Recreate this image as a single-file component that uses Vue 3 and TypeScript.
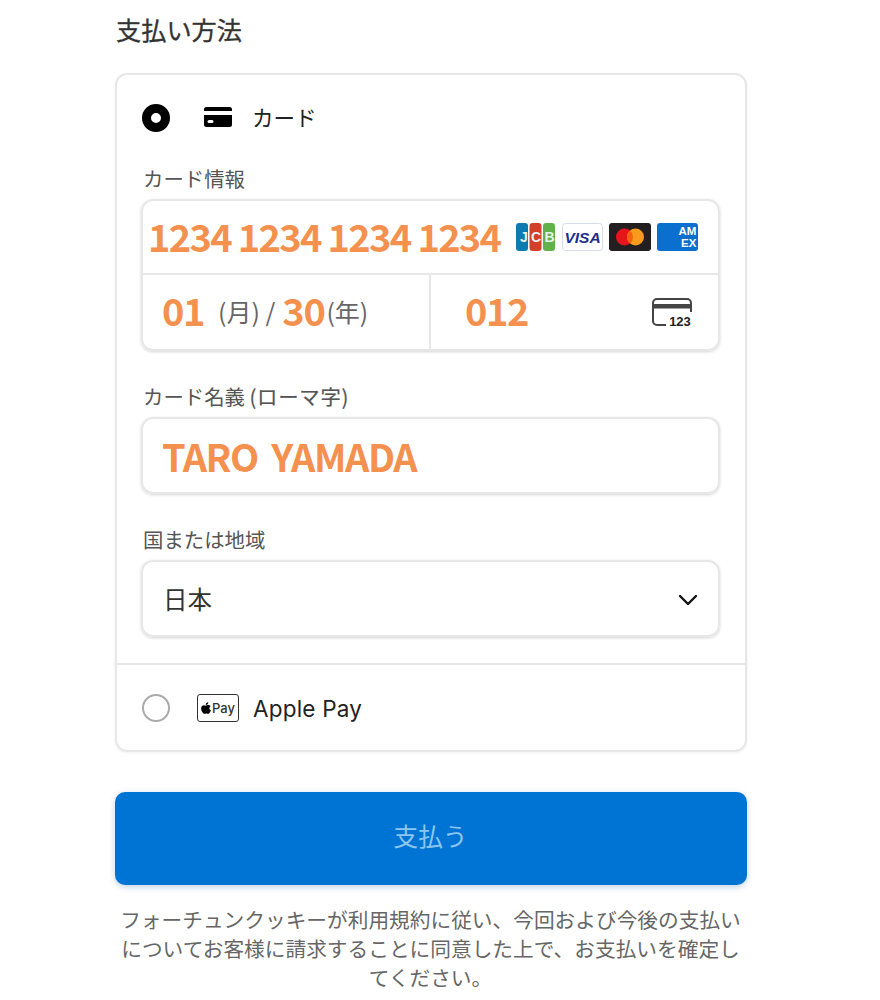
<script setup lang="ts">
const brand = 'Payment'
</script>

<template>
  <main class="page" :aria-label="brand">
    <h1 class="title">支払い方法</h1>
    <section class="card">
      <div class="method">
        <span class="radio on"></span>
        <svg class="card-icon" width="28" height="20" viewBox="0 0 28 20">
          <path d="M0 2.5A2.5 2.5 0 0 1 2.5 0h23A2.5 2.5 0 0 1 28 2.5V4H0zM0 8h28v9.5a2.5 2.5 0 0 1-2.5 2.5h-23A2.5 2.5 0 0 1 0 17.500zM5 13a1 1 0 0 0 0 3h3a1 1 0 0 0 0-3z" fill="#000" />
        </svg>
        <span class="method-name">カード</span>
      </div>
      <div class="details">
        <div class="label first">カード情報</div>
        <div class="group">
          <div class="num-row">
            <span class="num">1234 1234 1234 1234</span>
            <div class="brands">
              <svg width="39" height="28" viewBox="0 0 39 28">
                <rect x="0" width="12" height="28" rx="3" fill="#0b7bb0" />
                <rect x="13.500" width="12" height="28" rx="3" fill="#d0402b" />
                <rect x="27" width="12" height="28" rx="3" fill="#63b14a" />
                <text x="8" y="19" class="jcb">J</text>
                <text x="20" y="19" class="jcb">C</text>
                <text x="33.500" y="19" class="jcb">B</text>
              </svg>
              <svg width="41" height="28" viewBox="0 0 41 28">
                <rect x=".5" y=".5" width="40" height="27" rx="3" fill="#fff" stroke="#d6dbe6" />
                <text x="20.500" y="19.500" class="visa">VISA</text>
              </svg>
              <svg width="42" height="28" viewBox="0 0 42 28">
                <rect width="42" height="28" rx="3" fill="#231f20" />
                <circle cx="15.500" cy="14" r="8.500" fill="#e8141c" />
                <circle cx="26.500" cy="14" r="8.500" fill="#f79a1e" />
                <path d="M21 7.500a8.500 8.500 0 0 1 0 13 8.500 8.500 0 0 1 0-13z" fill="#f5610f" />
              </svg>
              <svg width="41" height="28" viewBox="0 0 41 28">
                <rect width="41" height="28" rx="3" fill="#0a6fce" />
                <text x="21.500" y="12" class="amex">AM</text>
                <text x="24" y="24" class="amex">EX</text>
              </svg>
            </div>
          </div>
          <div class="exp-row">
            <div class="exp">
              <span class="val">01</span>
              <span class="hint month">(月) /</span>
              <span class="val year">30</span>
              <span class="hint">(年)</span>
            </div>
            <div class="cvc">
              <span class="val">012</span>
              <svg class="cvc-icon" width="40" height="32" viewBox="0 0 40 32">
                <path d="M14 27H5a4 4 0 0 1-4-4V5a4 4 0 0 1 4-4h30a4 4 0 0 1 4 4v9" fill="none" stroke="#444" stroke-width="2" />
                <rect x="1" y="6" width="38" height="4.500" fill="#444" />
                <text x="28" y="27.500" class="cvc-text">123</text>
              </svg>
            </div>
          </div>
        </div>

        <div class="label">カード名義 <span class="roma">(ローマ字)</span></div>
        <div class="field name"><span class="val">TARO YAMADA</span></div>

        <div class="label">国または地域</div>
        <div class="field select">
          <span>日本</span>
          <svg width="20" height="12" viewBox="0 0 20 12">
            <path d="M2 2l8 8 8-8" fill="none" stroke="#111" stroke-width="2.400" stroke-linecap="round" stroke-linejoin="round" />
          </svg>
        </div>
      </div>
      <div class="method apple">
        <span class="radio"></span>
        <span class="apay">
          <svg width="10" height="12" viewBox="0 0 12 14">
            <path d="M8.700 0c.1 1-.3 1.900-.8 2.500-.6.700-1.400 1.100-2.200 1-.1-.9.300-1.800.8-2.400C7.100.500 8 .1 8.700 0zM11.500 4.800c-.9.600-1.400 1.400-1.400 2.500 0 1.200.7 2.200 1.800 2.700-.3.900-.7 1.700-1.300 2.500-.6.800-1.200 1.500-2.100 1.500s-1.200-.5-2.200-.5-1.400.5-2.200.5c-.9 0-1.500-.8-2.100-1.600C1 11.100.2 9.300.2 7.500c0-2.500 1.600-3.900 3.300-3.900.9 0 1.700.6 2.300.6.500 0 1.400-.7 2.500-.7.900 0 2.500.4 3.200 1.300z" fill="#000" />
          </svg>
          <span>Pay</span>
        </span>
        <span class="method-name latin">Apple Pay</span>
      </div>
    </section>
    <button class="pay" type="button"><span class="pay-text">支払う</span></button>
    <p class="note">フォーチュンクッキーが利用規約に従い、今回および今後の支払いについてお客様に請求することに同意した上で、お支払いを確定してください。</p>
  </main>
</template>

<style>
html, body { margin: 0; background: #fff; }
</style>

<style scoped>
.page {
  box-sizing: border-box;
  width: 632px;
  margin-left: 114.500px;
  padding-top: 11px;
  font-family: "Noto Sans CJK JP", "Noto Sans", sans-serif;
  color: #222;
}
.title {
  margin: 0 0 26px 1.500px;
  font-size: 25.200px;
  line-height: 36px;
  font-weight: 400;
  color: #333;
  -webkit-text-stroke: .3px #333;
}
.card {
  box-sizing: border-box;
  height: 679px;
  border: 2px solid #e7e7e7;
  border-radius: 12px;
  box-shadow: 0 1px 3px rgba(0, 0, 0, .06);
  display: flex;
  flex-direction: column;
}
.method {
  display: flex;
  align-items: center;
  height: 85px;
  padding-left: 25.500px;
  flex: none;
}
.radio {
  box-sizing: border-box;
  width: 28px;
  height: 28px;
  border-radius: 50%;
  border: 2px solid #aaa;
  flex: none;
}
.radio.on {
  border: 9px solid #000;
  background: #fff;
}
.card-icon { margin-left: 34px; flex: none; margin-top: -2px; }
.method-name {
  margin-left: 20px;
  margin-bottom: 2px;
  font-size: 21.500px;
  color: #222;
}
.latin {
  margin-left: 14px;
  margin-bottom: 0;
  font-family: "Inter", "Noto Sans", sans-serif;
  font-size: 22.500px;
  letter-spacing: .2px;
}
.details {
  padding: 0 24.500px 26px;
  border-bottom: 2px solid #e7e7e7;
  flex: 1;
}
.label {
  font-size: 20.400px;
  line-height: 28px;
  color: #555;
  margin: 31px 0 7px 2px;
}
.label.first { margin-top: 4px; }
.roma { letter-spacing: .7px; -webkit-text-stroke: .2px #555; }
.group, .field {
  border: 2px solid #e7e7e7;
  border-radius: 12px;
  box-shadow: 0 1px 3px rgba(0, 0, 0, .17);
  box-sizing: border-box;
}
.group { height: 152px; }
.num-row {
  box-sizing: border-box;
  display: flex;
  align-items: center;
  height: 74px;
  padding: 0 20px 0 5px;
  border-bottom: 2px solid #e7e7e7;
  justify-content: space-between;
}
.num {
  font-size: 38px;
  font-weight: 700;
  color: #f5914f;
  letter-spacing: -1.700px;
  white-space: nowrap;
  margin-bottom: 4px;
}
.brands { display: flex; gap: 6px; align-items: center; flex: none; }
.brands svg { display: block; }
.brands svg:first-child { margin-right: 1px; }
.jcb {
  font: 700 14px "Liberation Sans", sans-serif;
  fill: #e8f2ee;
  text-anchor: middle;
}
.visa {
  font: italic 700 15.500px "Liberation Sans", sans-serif;
  fill: #1a2f8f;
  text-anchor: middle;
}
.amex {
  font: 700 11.500px "Liberation Sans", sans-serif;
  fill: #fff;
}
.exp-row { display: flex; height: 74px; }
.exp {
  display: flex;
  align-items: center;
  width: 288px;
  box-sizing: border-box;
  padding-left: 19px;
  border-right: 2px solid #e7e7e7;
}
.val {
  font-size: 38px;
  font-weight: 700;
  color: #f5914f;
  letter-spacing: -1.400px;
}
.exp .val, .cvc .val { margin-bottom: 6px; }
.hint {
  font-size: 25px;
  color: #666;
  margin-bottom: 2px;
}
.month { margin-left: 14px; }
.year { margin-left: 7px; margin-right: 2px; }
.cvc {
  flex: 1;
  display: flex;
  align-items: center;
  justify-content: space-between;
  padding: 0 26px 0 34px;
}
.cvc-icon { margin-top: 4px; }
.cvc-text {
  font: 700 13px "Liberation Sans", sans-serif;
  fill: #222;
  text-anchor: middle;
}
.field {
  height: 77px;
  display: flex;
  align-items: center;
  padding: 0 19px;
}
.name .val { word-spacing: 6px; letter-spacing: -1.400px; }
.select {
  justify-content: space-between;
  font-size: 24.500px;
  color: #333;
  padding: 0 20px;
}
.select svg { margin: 2px 0 0 0; }
.apple { flex: none; height: 86px; }
.apay {
  box-sizing: border-box;
  margin-left: 27px;
  width: 42px;
  height: 28px;
  border: 1px solid #333;
  border-radius: 3px;
  display: flex;
  align-items: center;
  justify-content: center;
  gap: 1px;
  font: 500 13px "Inter", sans-serif;
  color: #333;
}
.pay {
  display: block;
  width: 100%;
  height: 93px;
  margin-top: 40px;
  padding: 0;
  border: 0;
  border-radius: 10px;
  background: #0074d4;
  box-shadow: 0 2px 6px rgba(0, 80, 160, .25);
  color: #8cc6f0;
  font-family: inherit;
  font-size: 24.700px;
}
.pay-text { display: block; margin-bottom: 7px; }
.note {
  margin: 20px 0 0;
  text-align: center;
  font-size: 20.700px;
  line-height: 29px;
  color: #666;
}
</style>
